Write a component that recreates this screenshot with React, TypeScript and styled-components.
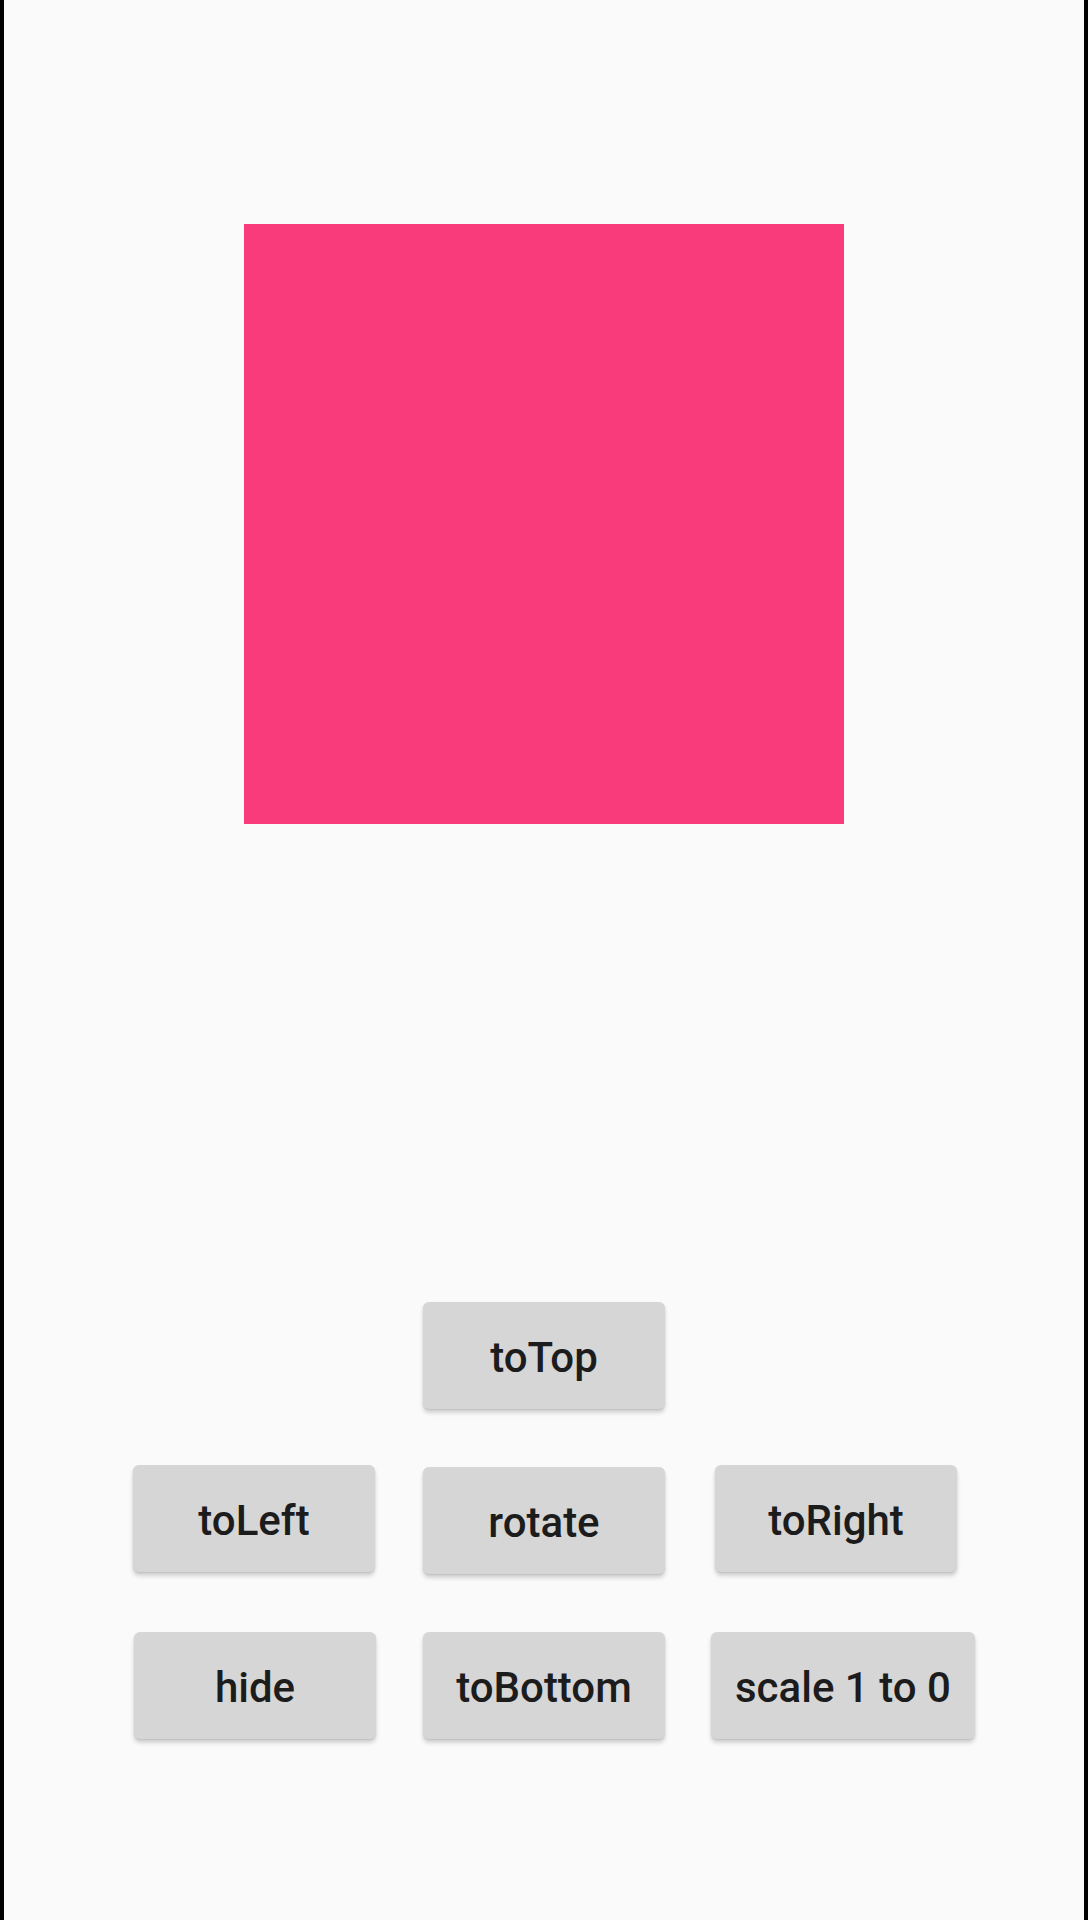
import React from "react";
import styled, { createGlobalStyle } from "styled-components";

const GlobalStyle = createGlobalStyle`
  html, body {
    margin: 0;
    padding: 0;
    background: #fafafa;
  }
  * { box-sizing: border-box; }
`;

const Screen = styled.div`
  min-height: 1920px;
  width: 1088px;
  background: #fafafa;
  border-left: 4px solid #000;
  border-right: 4px solid #000;
  padding-top: 224px;
  display: flex;
  flex-direction: column;
  align-items: center;
`;

const Square = styled.div`
  width: 600px;
  height: 600px;
  background: #f93b7b;
  flex-shrink: 0;
`;

const Controls = styled.div`
  margin-top: 478px;
  width: 100%;
  display: grid;
  grid-template-columns: 1fr 242px 1fr;
  grid-template-rows: 163px 167px auto;
`;

type Place = "left" | "center" | "right";

const ActionButton = styled.button<{ $place: Place; $gap?: number }>`
  grid-column: ${(p) => (p.$place === "left" ? 1 : p.$place === "center" ? 2 : 3)};
  justify-self: ${(p) => (p.$place === "left" ? "end" : p.$place === "center" ? "center" : "start")};
  align-self: start;
  margin-right: ${(p) => (p.$place === "left" ? `${p.$gap ?? 0}px` : "0")};
  margin-left: ${(p) => (p.$place === "right" ? `${p.$gap ?? 0}px` : "0")};
  min-width: 242px;
  height: 107px;
  padding: 4px 24px 0;
  border: none;
  border-radius: 6px;
  background: #d6d6d6;
  box-shadow: 0 4px 4px rgba(0, 0, 0, 0.16), 0 1px 2px rgba(0, 0, 0, 0.1);
  color: #1c1c1c;
  font-family: Roboto, "Noto Sans", sans-serif;
  font-weight: 500;
  font-size: 42px;
  line-height: 1;
  white-space: nowrap;
  display: flex;
  align-items: center;
  justify-content: center;
  cursor: pointer;
`;

const Spacer = styled.div<{ $col: number }>`
  grid-column: ${(p) => p.$col};
`;

export default function App() {
  return (
    <>
      <GlobalStyle />
      <Screen>
        <Square />
        <Controls>
          <Spacer $col={1} />
          <ActionButton $place="center">toTop</ActionButton>
          <Spacer $col={3} />
          <ActionButton $place="left" $gap={48}>toLeft</ActionButton>
          <ActionButton $place="center" style={{ marginTop: 2 }}>rotate</ActionButton>
          <ActionButton $place="right" $gap={50}>toRight</ActionButton>
          <ActionButton $place="left" $gap={47}>hide</ActionButton>
          <ActionButton $place="center">toBottom</ActionButton>
          <ActionButton $place="right" $gap={46}>scale 1 to 0</ActionButton>
        </Controls>
      </Screen>
    </>
  );
}
